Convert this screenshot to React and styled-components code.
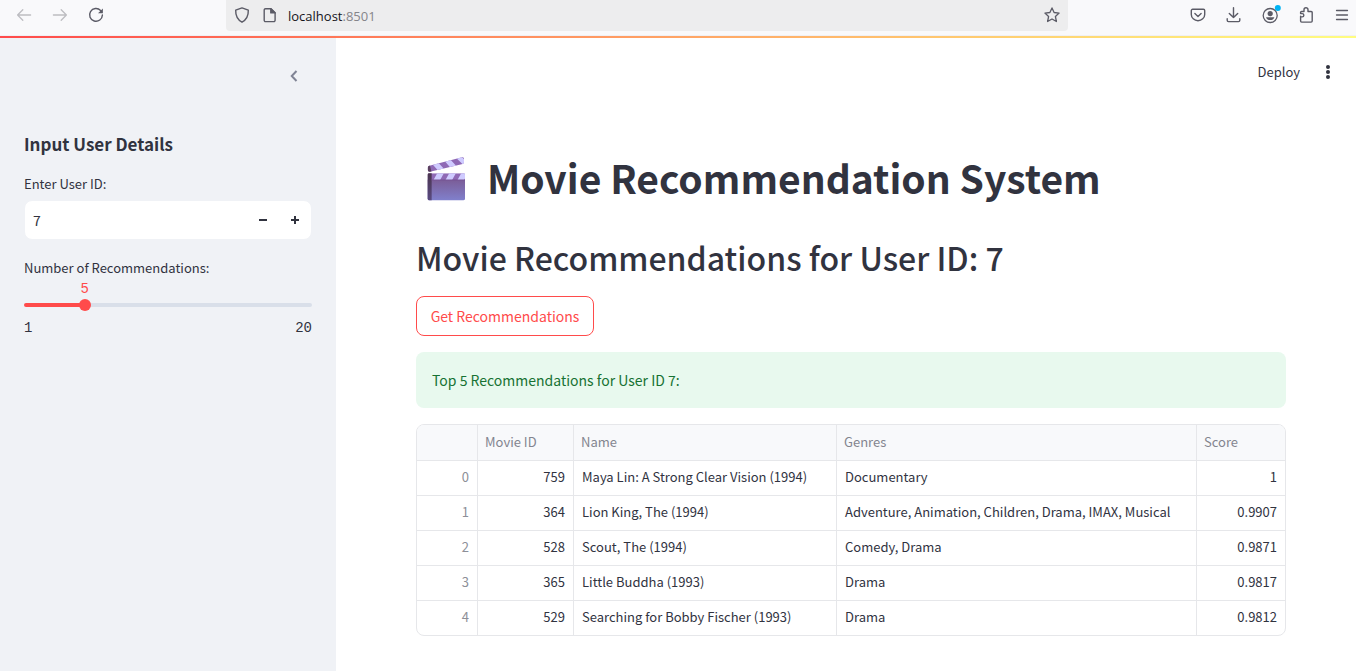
import React, { useState } from "react";
import styled, { createGlobalStyle } from "styled-components";

const sans = `"Noto Sans CJK SC", "Noto Sans", sans-serif`;
const mono = `"Liberation Mono", monospace`;

const GlobalStyle = createGlobalStyle`
  *, *::before, *::after { box-sizing: border-box; }
  body { margin: 0; background: #fff; color: #31333f; font-family: ${sans}; font-size: 13px; }
  button, input { font: inherit; color: inherit; }
`;

const Page = styled.div`
  min-height: 100vh;
  display: flex;
  flex-direction: column;
`;

/* ---------- browser bar ---------- */

const BrowserBar = styled.header`
  display: flex;
  height: 36px;
  padding: 0 6px 4px 16px;
  background: #f9f9fb;
  border-bottom: 1px solid #f0f0f4;
`;

const ToolGroup = styled.div`
  display: flex;
  align-items: center;
  gap: 20px;
`;

const IconButton = styled.button`
  display: flex;
  padding: 0;
  border: 0;
  background: none;
  color: ${(p) => p.$color || "#31333f"};
  cursor: pointer;
`;

const BrowserButton = styled(IconButton)`
  padding-bottom: 1px;
  color: ${(p) => (p.$faded ? "#bdbdc1" : "#5b5b66")};
`;

const AddressBar = styled.div`
  flex: 1;
  min-width: 0;
  margin: 0 122px;
  padding: 0 8px;
  display: flex;
  align-items: center;
  gap: 12px;
  background: #ededee;
  border-radius: 0 0 4px 4px;
`;

const Address = styled.span`
  flex: 1;
  margin-left: -2px;
  font: 13px/20px "Open Sans", sans-serif;
  color: #15141a;
`;

const Port = styled.span`
  color: #85858a;
`;

const Rainbow = styled.div`
  height: 2px;
  background: linear-gradient(90deg, #ff4b4b, #fffd80);
`;

/* ---------- layout ---------- */

const Body = styled.div`
  flex: 1;
  display: flex;
`;

const Sidebar = styled.aside`
  flex: 0 0 336px;
  padding: 28px 24px 24px;
  background: #f0f2f6;
`;

const CollapseRow = styled.div`
  display: flex;
  justify-content: flex-end;
  padding-right: 8px;
  margin-bottom: 46px;
`;

const SidebarTitle = styled.h2`
  margin: 0 0 18px;
  font-size: 17px;
  line-height: 24px;
  font-weight: 700;
`;

const Label = styled.label`
  display: block;
  font-size: 13px;
  line-height: 20px;
  margin-bottom: ${(p) => p.$gap || 0}px;
`;

const NumberBox = styled.div`
  display: flex;
  height: 40px;
  margin-bottom: 18px;
  border: 1px solid #f0f2f6;
  border-radius: 8px;
  background: #fff;
  overflow: hidden;
`;

const NumberInput = styled.input`
  flex: 1;
  min-width: 0;
  padding: 0 8px;
  border: 0;
  outline: 0;
  background: none;
  font-size: 14px;
  appearance: textfield;
  &::-webkit-inner-spin-button { appearance: none; margin: 0; }
`;

const StepButton = styled.button`
  width: 32px;
  padding: 0;
  display: flex;
  align-items: center;
  justify-content: center;
  border: 0;
  background: none;
  cursor: pointer;
`;

const SliderValue = styled.output`
  display: block;
  width: 20px;
  margin-left: -10px;
  text-align: center;
  font: 14px/20px ${mono};
  color: #ff4b4b;
`;

const SliderTrack = styled.div`
  height: 4px;
  margin: 4px 0 11px;
  display: flex;
  align-items: center;
  border-radius: 4px;
`;

const Range = styled.input`
  flex: 1;
  min-width: 0;
  margin: 0 -6px;
  height: 12px;
  appearance: none;
  background: none;
  cursor: pointer;
  &::-webkit-slider-thumb {
    appearance: none;
    width: 12px;
    height: 12px;
    border-radius: 50%;
    background: #ff4b4b;
  }
`;

const Ticks = styled.div`
  display: flex;
  justify-content: space-between;
  font: 14px/20px ${mono};
`;

const Main = styled.main`
  flex: 1;
  min-width: 0;
`;

const AppBar = styled.div`
  display: flex;
  justify-content: flex-end;
  align-items: center;
  gap: 20px;
  height: 68px;
  padding-right: 20px;
`;

const DeployButton = styled.button`
  padding: 0;
  border: 0;
  background: none;
  font-size: 13px;
  line-height: 20px;
  cursor: pointer;
`;

const Content = styled.div`
  padding: 47px 70px 32px 80px;
`;

const Title = styled.h1`
  display: flex;
  align-items: flex-end;
  gap: 21px;
  margin: 0;
  padding-left: 10px;
  font-size: 39px;
  line-height: 48px;
  font-weight: 700;
`;

const Subtitle = styled.h2`
  margin: 36px 0 19px;
  font-size: 32px;
  line-height: 40px;
  font-weight: 500;
`;

const PrimaryButton = styled.button`
  display: block;
  min-width: 178px;
  height: 40px;
  padding: 0 12px;
  border: 1px solid #ff4b4b;
  border-radius: 8px;
  background: #fff;
  color: #ff4b4b;
  font-size: 14px;
  cursor: pointer;
`;

const Alert = styled.div`
  margin: 16px 0;
  padding: 16px;
  border-radius: 8px;
  background: #e8f9ee;
  color: #177233;
  font-size: 14px;
  line-height: 24px;
`;

const TableFrame = styled.div`
  border: 1px solid #e6e7ea;
  border-radius: 8px;
  overflow: hidden;
`;

const Table = styled.table`
  width: 100%;
  table-layout: fixed;
  border-collapse: separate;
  border-spacing: 0;
  tr > * { border-right: 1px solid #e6e7ea; border-bottom: 1px solid #e6e7ea; }
  tr > *:last-child { border-right: 0; }
  tbody tr:last-child > * { border-bottom: 0; height: 34px; }
`;

const Col = styled.col`
  width: ${(p) => (p.$w ? `${p.$w}px` : "auto")};
`;

const Th = styled.th`
  height: 36px;
  padding: 0 7px 2px;
  background: #f8f9fb;
  color: #83858f;
  font-weight: 400;
  line-height: 20px;
  text-align: left;
`;

const Td = styled.td`
  height: 35px;
  padding: 0 8px 2px;
  line-height: 20px;
  white-space: nowrap;
  text-align: ${(p) => (p.$number ? "right" : "left")};
  color: ${(p) => (p.$index ? "#8d8f98" : "#31333f")};
`;

/* ---------- icons ---------- */

const Icon = ({ size = 16, children, w = 1.3 }) => (
  <svg width={size} height={size} viewBox="0 0 16 16" fill="none" stroke="currentColor"
    strokeWidth={w} strokeLinecap="round" strokeLinejoin="round" overflow="visible" aria-hidden="true">
    {children}
  </svg>
);

const BackIcon = () => <Icon><path d="M14.6 8H1.6M6.8 2.8 1.6 8l5.2 5.2" /></Icon>;
const ForwardIcon = () => <Icon><path d="M1.4 8h13M9.2 2.8 14.4 8l-5.2 5.2" /></Icon>;
const ReloadIcon = () => (
  <Icon w={1.4}>
    <path d="M12.6 3.4A6.4 6.4 0 1 0 14.4 8" />
    <path d="M14.9 1.4v4.9H10z" fill="currentColor" stroke="none" />
  </Icon>
);
const ShieldIcon = () => (
  <Icon w={1.4}><path d="M8 .9 14.3 3.2c.2 5-1.7 9.3-6.3 12C3.400 12.500 1.500 8.200 1.700 3.200Z" /></Icon>
);
const PageIcon = () => (
  <Icon w={1.4}>
    <path d="M3.500 1.700h5.500L13.100 5.800V13.300a1.300 1.300 0 0 1-1.300 1.300H3.500a1.300 1.300 0 0 1-1.300-1.300V3A1.300 1.300 0 0 1 3.500 1.700Z" />
    <path d="M8.800 1.700v4.200h4.300Z" fill="currentColor" />
  </Icon>
);
const StarIcon = () => (
  <Icon><path d="m8 .9 2.100 4.600 5 .6-3.700 3.400 1 5L8 12l-4.400 2.500 1-5L.9 6.100l5-.6Z" /></Icon>
);
const PocketIcon = () => (
  <Icon w={1.4}>
    <path d="M2.600 2.300h10.800a1.300 1.300 0 0 1 1.300 1.300v3.800a6.700 6.300 0 0 1-13.400 0V3.600a1.300 1.300 0 0 1 1.300-1.300Z" />
    <path d="m4.900 6.600 3.100 2.900 3.100-2.900" />
  </Icon>
);
const DownloadIcon = () => (
  <Icon w={1.4}><path d="M7.500.7v9.800M3.300 6.400l4.200 4.100 4.200-4.100M1.200 11.700v1.600c0 .8.500 1.300 1.300 1.300h10c.8 0 1.300-.5 1.300-1.300v-1.600" /></Icon>
);
const AccountIcon = () => (
  <Icon w={1.3}>
    <circle cx="8.200" cy="8.500" r="7" />
    <circle cx="8.200" cy="6.600" r="2.600" fill="currentColor" stroke="none" />
    <path d="M4 10.200h8.400c-.6 1.900-2.200 2.900-4.200 2.900s-3.600-1-4.200-2.900Z" fill="currentColor" stroke="none" />
    <circle cx="15.800" cy="1" r="3" fill="#00b3f4" stroke="none" />
  </Icon>
);
const PuzzleIcon = () => (
  <Icon w={1.4}>
    <path d="M2.600 9.300V14a1.100 1.100 0 0 0 1.100 1.100h9.400a1.100 1.100 0 0 0 1.100-1.100V5.600a1.100 1.100 0 0 0-1.100-1.100H10V2.700a2 2 0 0 0-4 0v1.800H3.700a1.100 1.100 0 0 0-1.100 1.100v1h1.600a1.600 1.600 0 0 1 0 3.300H2.600" />
  </Icon>
);
const MenuIcon = () => <Icon w={1.3}><path d="M2.500 3.500h11M2.500 8h11M2.500 12.500h11" /></Icon>;
const ChevronIcon = () => (
  <Icon size={20} w={1.6}><path d="M10 4 6.200 8l3.800 4" strokeLinecap="butt" strokeLinejoin="miter" /></Icon>
);
const MinusIcon = () => (
  <svg width="8" height="8" viewBox="0 0 8 8" aria-hidden="true"><path d="M0 3h8v2H0z" fill="currentColor" /></svg>
);
const PlusIcon = () => (
  <svg width="8" height="8" viewBox="0 0 8 8" aria-hidden="true"><path d="M0 3h3V0h2v3h3v2H5v3H3V5H0z" fill="currentColor" /></svg>
);
const DotsIcon = () => (
  <svg width="16" height="16" viewBox="0 0 16 16" fill="currentColor" aria-hidden="true">
    <circle cx="8" cy="3" r="2" /><circle cx="8" cy="8" r="2" /><circle cx="8" cy="13" r="2" />
  </svg>
);

const ClapperIcon = () => (
  <svg width="40" height="44" viewBox="0 0 120 132" role="img" aria-label="clapper board">
    <defs>
      <linearGradient id="slate" x1="0" y1="0" x2="0" y2="1">
        <stop offset="0" stopColor="#7b5d97" />
        <stop offset="1" stopColor="#8080cc" />
      </linearGradient>
      <linearGradient id="hinge" x1="0" y1="0" x2="0" y2="1">
        <stop offset="0" stopColor="#4b3550" />
        <stop offset="1" stopColor="#594a80" />
      </linearGradient>
      <clipPath id="arm"><path d="M10 26 108 1q5-1 6 4v11q0 3-4 5L12 44q-6 1-7-5v-7q0-5 5-6Z" /></clipPath>
      <clipPath id="bar"><path d="M9 49h104q4 0 4 4v17H5V53q0-4 4-4Z" /></clipPath>
    </defs>
    <g clipPath="url(#arm)">
      <path d="M0 0h120v50H0z" fill="#8f69b5" />
      <path d="m18 20 17-5 20 22-17 6ZM54 10l17-5 20 22-17 6ZM90 2l14-6 18 20-12 6Z" fill="#cfcbff" />
      <path d="M0 22h11l6 24H0z" fill="#5b4060" />
    </g>
    <path d="M5 68h112v57q0 5-5 5H10q-5 0-5-5Z" fill="url(#slate)" />
    <g clipPath="url(#bar)">
      <path d="M0 48h120v22H0z" fill="#8f69b5" />
      <path d="M34 48h20L42 70H22ZM70 48h20L78 70H58ZM106 48h20l-12 22H94Z" fill="#cfcbff" />
    </g>
    <path d="M9 49h8v81h-7q-5 0-5-5V53q0-4 4-4Z" fill="url(#hinge)" />
    <path d="M17 69h100" stroke="#745293" strokeWidth="3" />
  </svg>
);

const movies = [
  [759, "Maya Lin: A Strong Clear Vision (1994)", "Documentary", "1"],
  [364, "Lion King, The (1994)", "Adventure, Animation, Children, Drama, IMAX, Musical", "0.9907"],
  [528, "Scout, The (1994)", "Comedy, Drama", "0.9871"],
  [365, "Little Buddha (1993)", "Drama", "0.9817"],
  [529, "Searching for Bobby Fischer (1993)", "Drama", "0.9812"],
];

export default function App() {
  const [userId, setUserId] = useState(7);
  const [count, setCount] = useState(5);
  const pct = ((count - 1) / 19) * 100;

  return (
    <Page>
      <GlobalStyle />
      <BrowserBar>
        <ToolGroup>
          <BrowserButton $faded aria-label="Back"><BackIcon /></BrowserButton>
          <BrowserButton $faded aria-label="Forward"><ForwardIcon /></BrowserButton>
          <BrowserButton aria-label="Reload"><ReloadIcon /></BrowserButton>
        </ToolGroup>
        <AddressBar>
          <BrowserButton aria-label="Protection"><ShieldIcon /></BrowserButton>
          <BrowserButton aria-label="Site information"><PageIcon /></BrowserButton>
          <Address>localhost<Port>:8501</Port></Address>
          <BrowserButton aria-label="Bookmark"><StarIcon /></BrowserButton>
        </AddressBar>
        <ToolGroup>
          <BrowserButton aria-label="Pocket"><PocketIcon /></BrowserButton>
          <BrowserButton aria-label="Downloads"><DownloadIcon /></BrowserButton>
          <BrowserButton aria-label="Account"><AccountIcon /></BrowserButton>
          <BrowserButton aria-label="Extensions"><PuzzleIcon /></BrowserButton>
          <BrowserButton aria-label="Menu"><MenuIcon /></BrowserButton>
        </ToolGroup>
      </BrowserBar>
      <Rainbow />
      <Body>
        <Sidebar>
          <CollapseRow>
            <IconButton $color="#808495" aria-label="Collapse sidebar"><ChevronIcon /></IconButton>
          </CollapseRow>
          <SidebarTitle>Input User Details</SidebarTitle>
          <Label htmlFor="user-id" $gap={6}>Enter User ID:</Label>
          <NumberBox>
            <NumberInput id="user-id" type="number" value={userId} onChange={(e) => setUserId(e.target.value)} />
            <StepButton aria-label="Decrease" onClick={() => setUserId(Number(userId) - 1)}><MinusIcon /></StepButton>
            <StepButton aria-label="Increase" onClick={() => setUserId(Number(userId) + 1)}><PlusIcon /></StepButton>
          </NumberBox>
          <Label htmlFor="count" $gap={1}>Number of Recommendations:</Label>
          <div style={{ paddingLeft: `${pct}%` }}>
            <SliderValue htmlFor="count">{count}</SliderValue>
          </div>
          <SliderTrack style={{ background: `linear-gradient(90deg, #ff4b4b ${pct}%, #d9dfe9 ${pct}%)` }}>
            <Range id="count" type="range" min="1" max="20" value={count} onChange={(e) => setCount(Number(e.target.value))} />
          </SliderTrack>
          <Ticks><span>1</span><span>20</span></Ticks>
        </Sidebar>
        <Main>
          <AppBar>
            <DeployButton>Deploy</DeployButton>
            <IconButton aria-label="Main menu"><DotsIcon /></IconButton>
          </AppBar>
          <Content>
            <Title><ClapperIcon />Movie Recommendation System</Title>
            <Subtitle>Movie Recommendations for User ID: {userId}</Subtitle>
            <PrimaryButton>Get Recommendations</PrimaryButton>
            <Alert role="status">Top {count} Recommendations for User ID {userId}:</Alert>
            <TableFrame>
              <Table>
                <colgroup>
                  <Col $w={61} /><Col $w={96} /><Col $w={263} /><Col /><Col $w={88} />
                </colgroup>
                <thead>
                  <tr>
                    <Th aria-label="Index" /><Th>Movie ID</Th><Th>Name</Th><Th>Genres</Th><Th>Score</Th>
                  </tr>
                </thead>
                <tbody>
                  {movies.map(([id, name, genres, score], i) => (
                    <tr key={id}>
                      <Td $number $index>{i}</Td>
                      <Td $number>{id}</Td>
                      <Td>{name}</Td>
                      <Td>{genres}</Td>
                      <Td $number>{score}</Td>
                    </tr>
                  ))}
                </tbody>
              </Table>
            </TableFrame>
          </Content>
        </Main>
      </Body>
    </Page>
  );
}
